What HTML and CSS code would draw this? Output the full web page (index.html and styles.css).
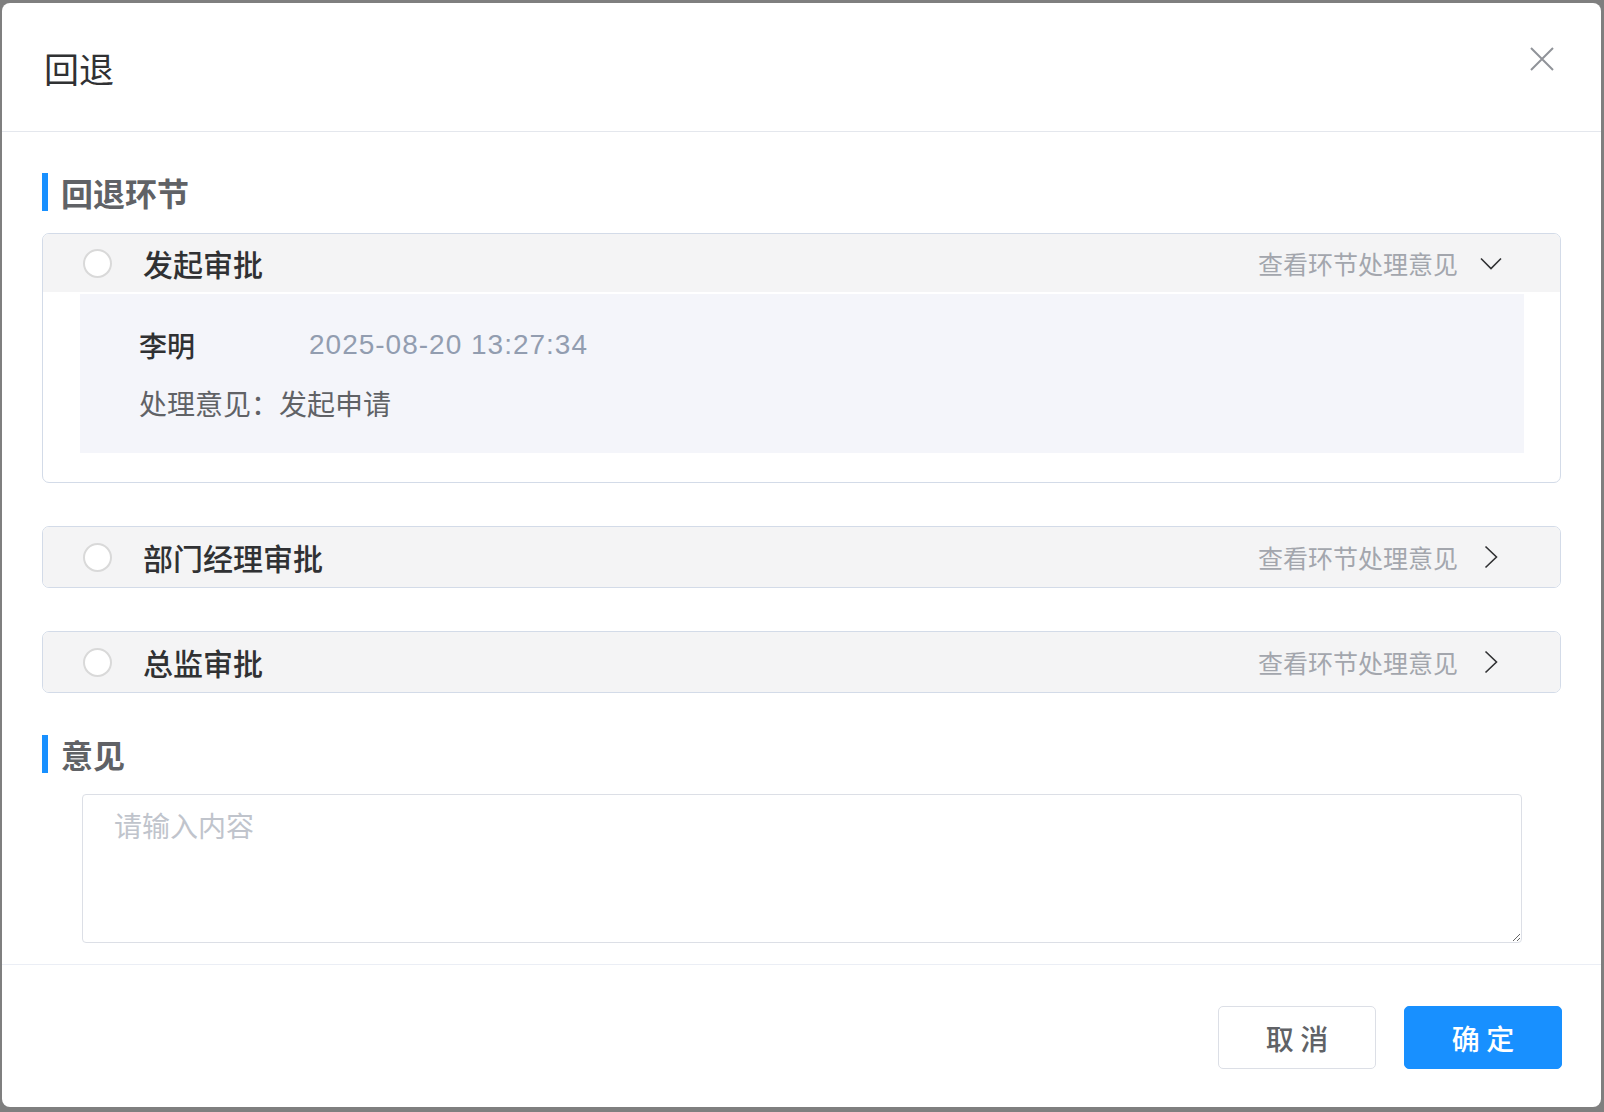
FILE: index.html
```html
<!DOCTYPE html>
<html lang="zh-CN">
<head>
<meta charset="utf-8">
<title>回退</title>
<link rel="stylesheet" href="styles.css">
</head>
<body>
<div class="dialog">
  <div class="dialog-header">
    <span class="dialog-title">回退</span>
    <button class="close-btn" aria-label="关闭">
      <svg width="24" height="24" viewBox="0 0 24 24"><path d="M1 1 L23 23 M23 1 L1 23" stroke="#909399" stroke-width="2" fill="none"/></svg>
    </button>
  </div>
  <div class="dialog-body">
    <div class="section-title"><span class="bar"></span><span class="section-text">回退环节</span></div>
    <div class="step-list">
      <div class="step-card expanded">
        <div class="step-head">
          <span class="radio"></span>
          <span class="step-name">发起审批</span>
          <span class="step-link">查看环节处理意见</span>
          <svg class="chev" width="24" height="24" viewBox="0 0 24 24"><path d="M2 7.5 L12 17.5 L22 7.5" stroke="#303133" stroke-width="1.6" fill="none"/></svg>
        </div>
        <div class="step-detail">
          <div class="detail-line"><span class="person">李明</span><span class="time">2025-08-20 13:27:34</span></div>
          <div class="detail-line opinion">处理意见：发起申请</div>
        </div>
      </div>
      <div class="step-card">
        <div class="step-head">
          <span class="radio"></span>
          <span class="step-name">部门经理审批</span>
          <span class="step-link">查看环节处理意见</span>
          <svg class="chev" width="24" height="24" viewBox="0 0 24 24"><path d="M6.5 1.5 L17.5 12 L6.5 22.5" stroke="#303133" stroke-width="1.6" fill="none"/></svg>
        </div>
      </div>
      <div class="step-card">
        <div class="step-head">
          <span class="radio"></span>
          <span class="step-name">总监审批</span>
          <span class="step-link">查看环节处理意见</span>
          <svg class="chev" width="24" height="24" viewBox="0 0 24 24"><path d="M6.5 1.5 L17.5 12 L6.5 22.5" stroke="#303133" stroke-width="1.6" fill="none"/></svg>
        </div>
      </div>
    </div>
    <div class="section-title second"><span class="bar"></span><span class="section-text">意见</span></div>
    <textarea class="opinion-input" placeholder="请输入内容"></textarea>
  </div>
  <div class="dialog-footer">
    <button class="btn btn-cancel">取 消</button>
    <button class="btn btn-primary">确 定</button>
  </div>
</div>
</body>
</html>
```

FILE: styles.css
```css
* { box-sizing: border-box; }
html, body { margin: 0; padding: 0; }
body {
  background: #7f7f7f;
  width: 1604px;
  height: 1112px;
  overflow: hidden;
  font-family: "Noto Sans CJK SC", "Noto Sans", sans-serif;
}
.dialog {
  margin: 3px 0 0 2px;
  width: 1599px;
  height: 1104px;
  background: #fff;
  border-radius: 8px;
  display: flex;
  flex-direction: column;
  position: relative;
}
.dialog-header {
  height: 130px;
  border-bottom: 1px solid #e4e7ed;
  display: flex;
  align-items: center;
  padding: 0 40px 0 42px;
}
.dialog-title {
  font-size: 35px;
  color: #303133;
  line-height: 48px;
  margin-top: 1px;
}
.close-btn {
  position: absolute;
  top: 44px;
  right: 47px;
  width: 24px;
  height: 24px;
  padding: 0;
  border: 0;
  background: none;
  display: block;
}
.close-btn svg { display: block; }
.dialog-body {
  padding: 41px 40px 0;
  display: flex;
  flex-direction: column;
}
.section-title {
  display: flex;
  align-items: center;
  height: 38px;
}
.section-title .bar {
  width: 6px;
  height: 38px;
  background: #1890ff;
}
.section-text {
  margin-left: 13px;
  font-size: 32px;
  font-weight: 700;
  color: #606266;
  line-height: 38px;
}
.step-list {
  margin-top: 22px;
  display: flex;
  flex-direction: column;
  gap: 43px;
}
.step-card {
  border: 1px solid #d3dbe8;
  border-radius: 7px;
  overflow: hidden;
}
.step-card.expanded { padding-bottom: 29px; }
.step-head {
  height: 60px;
  background: #f4f4f5;
  display: flex;
  align-items: center;
  padding: 0 57px 0 40px;
}
.step-card.expanded .step-head { height: 58px; margin-bottom: 2px; }
.radio {
  width: 29px;
  height: 29px;
  border-radius: 50%;
  border: 2px solid #d9d9d9;
  background: #fff;
  flex: none;
}
.step-name {
  margin-left: 31px;
  font-size: 30px;
  font-weight: 500;
  color: #303133;
  flex: 1;
  line-height: 40px;
}
.step-link {
  font-size: 25px;
  color: #a3a6ad;
  margin-right: 21px;
  line-height: 36px;
}
.chev { display: block; flex: none; }
.step-detail {
  margin: 0 36px 0 37px;
  background: #f4f5fa;
  padding: 31px 59px 30px;
  display: flex;
  flex-direction: column;
  gap: 18px;
}
.detail-line {
  display: flex;
  align-items: center;
  height: 40px;
  font-size: 28px;
  line-height: 40px;
}
.person {
  width: 170px;
  font-weight: 500;
  color: #303133;
}
.time {
  font-family: "Liberation Sans", "Noto Sans", sans-serif;
  color: #929db0;
  letter-spacing: 1px;
}
.opinion { color: #606266; }
.section-title.second { margin-top: 42px; }
.opinion-input {
  margin: 21px 39px 0 40px;
  width: 1440px;
  height: 149px;
  border: 1.5px solid #dcdfe6;
  border-radius: 4px;
  padding: 9px 31px;
  font-family: "Noto Sans CJK SC", sans-serif;
  font-size: 28px;
  line-height: 42px;
  color: #606266;
  resize: vertical;
  outline: none;
}
.opinion-input::placeholder { color: #c0c4cc; }
.dialog-footer {
  margin-top: 21px;
  border-top: 1px solid #ebeef5;
  padding: 41px 39px 38px 40px;
  display: flex;
  justify-content: flex-end;
  gap: 28px;
}
.btn {
  width: 158px;
  height: 63px;
  border-radius: 5px;
  font-family: "Noto Sans CJK SC", sans-serif;
  font-size: 28px;
  font-weight: 500;
  padding: 0;
  cursor: pointer;
}
.btn-cancel {
  background: #fff;
  border: 1.5px solid #dcdfe6;
  color: #606266;
}
.btn-primary {
  background: #1890ff;
  border: 1px solid #1890ff;
  color: #fff;
}
```
